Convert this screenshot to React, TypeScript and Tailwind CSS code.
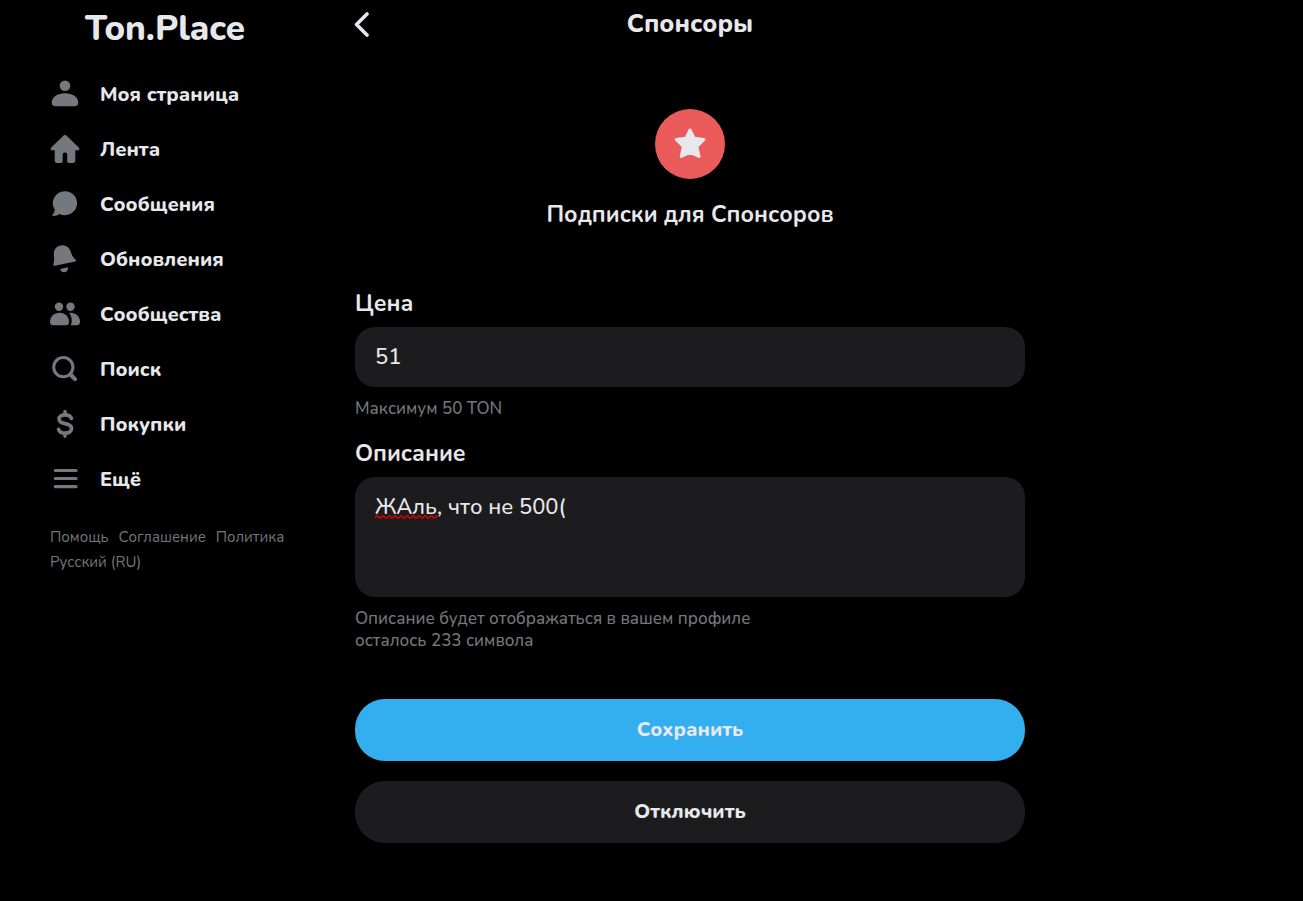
import { useState } from 'react'
import type { ReactNode } from 'react'

interface NavItem {
  label: string
  icon: ReactNode
}

const NAV_ITEMS: NavItem[] = [
  {
    label: 'Моя страница',
    icon: (
      <>
        <circle cx="15" cy="6.8" r="5.3" />
        <path d="M1.7 23.8C1.7 17.8 7.5 14.2 15 14.2S28.3 17.8 28.3 23.8C28.3 26.1 27 27.3 24.5 27.3H5.5C3 27.3 1.7 26.1 1.7 23.8Z" />
      </>
    ),
  },
  {
    label: 'Лента',
    icon: (
      <path d="M13.6 1.6a2 2 0 0 1 2.8 0L28.7 13.6c1.2 1.2.7 2.7-.9 2.7H25.3V26.5c0 1.6-.8 2.4-2.3 2.4H19.3c-1.5 0-2.1-.7-2.1-2.2V20.4c0-1.3-.8-2-2.2-2s-2.3.7-2.3 2V26.7c0 1.5-.6 2.2-2.1 2.2H7c-1.5 0-2.3-.8-2.3-2.4V16.3H2.2c-1.6 0-2.1-1.5-.9-2.7Z" />
    ),
  },
  {
    label: 'Сообщения',
    icon: (
      <path d="M15.2 2.2A12 12 0 1 1 9.6 24.9C7.8 26 5.5 26.8 3.2 26.9c-.8 0-1-.7-.5-1.3C3.9 24.2 4.6 22.5 4.7 20.6A12 12 0 0 1 15.2 2.2Z" />
    ),
  },
  {
    label: 'Обновления',
    icon: (
      <>
        <path d="M3.8 9.8C3.8 4.9 7.3 1.2 12 1.2c4.3 0 7.7 2.7 8.9 6.9.8 3 2.1 5.3 4.6 7.3 1 .9.7 1.9-.5 2.2L5 21.8c-1.3.3-2-.6-1.6-1.8.7-2.3.9-4 .7-6.3Z" />
        <path d="M10.1 25 18.2 23.2C18.2 26.3 16.5 28.3 14 28.3c-1.9 0-3.4-1.3-3.9-3.3Z" />
      </>
    ),
  },
  {
    label: 'Сообщества',
    icon: (
      <>
        <circle cx="9" cy="7.7" r="4.2" />
        <circle cx="20.5" cy="7.7" r="4.2" />
        <path d="M0 22.8C0 17.5 4 13.7 9.5 13.7S19 17.5 19 22.8c0 2.4-1.2 3.5-3.5 3.5h-12C1.2 26.3 0 25.2 0 22.8Z" />
        <path d="M18.9 13.8C25.5 13.2 30 17 30 22.8c0 2.4-1.2 3.5-3.5 3.5h-5.6c1.6-4.6 1-9.2-2-12.5Z" />
      </>
    ),
  },
  {
    label: 'Поиск',
    icon: (
      <g fill="none" stroke="currentColor" strokeLinecap="round">
        <circle cx="13.3" cy="13.2" r="9.6" strokeWidth="3" />
        <path d="M20.5 20.5 25 25.1" strokeWidth="4.2" />
      </g>
    ),
  },
  {
    label: 'Покупки',
    icon: (
      <g fill="none" stroke="currentColor" strokeLinecap="round">
        <path d="M15 2.6V5M15 25V27.2" strokeWidth="3.4" />
        <path
          d="M21.4 9.4C20.5 7 18.3 5.9 15.1 5.9c-3.6 0-6 1.6-6 4.3 0 2.5 2 3.6 6 4.4 4.2.8 6.4 2 6.4 4.9 0 2.9-2.5 4.7-6.4 4.7-3.4 0-5.7-1.2-6.5-3.7"
          strokeWidth="3.8"
        />
      </g>
    ),
  },
  {
    label: 'Ещё',
    icon: (
      <path
        d="M5.3 6.5H26M5.3 14.5H26M5.3 22.7H26"
        fill="none"
        stroke="currentColor"
        strokeWidth="3.2"
        strokeLinecap="round"
      />
    ),
  },
]

const FOOTER_LINKS = ['Помощь', 'Соглашение', 'Политика', 'Русский (RU)']

function Sidebar() {
  return (
    <aside>
      <a href="#" className="block pr-[55px] text-center text-[35px] leading-[58px] font-extrabold">
        Ton.Place
      </a>
      <nav className="mt-[9px]">
        {NAV_ITEMS.map(item => (
          <a key={item.label} href="#" className="flex h-[55px] items-center gap-5 text-xl font-extrabold">
            <svg viewBox="0 1 30 30" className="size-[30px] shrink-0 text-[#76787f]" fill="currentColor" aria-hidden="true">
              {item.icon}
            </svg>
            {item.label}
          </a>
        ))}
      </nav>
      <div className="mt-[18px] flex flex-wrap gap-x-[10px] text-[15px] leading-[25px] text-[#76767d]">
        {FOOTER_LINKS.map(link => (
          <a key={link} href="#">
            {link}
          </a>
        ))}
      </div>
    </aside>
  )
}

function SponsorForm() {
  const [price, setPrice] = useState('51')
  const [description, setDescription] = useState('ЖАль, что не 500(')

  return (
    <form className="mt-[55px] flex flex-col" onSubmit={e => e.preventDefault()}>
      <label htmlFor="price" className="text-[23px] leading-[34px] font-bold">
        Цена
      </label>
      <input
        id="price"
        value={price}
        onChange={e => setPrice(e.target.value)}
        className="mt-[6px] h-[60px] rounded-[20px] bg-[#1c1c1e] px-5 text-[22px] font-medium outline-none"
      />
      <p className="mt-[11px] text-[17px] leading-[22px] font-medium text-[#76767d]">Максимум 50 TON</p>

      <label htmlFor="description" className="mt-[17px] text-[23px] leading-[34px] font-bold">
        Описание
      </label>
      <div className="relative mt-[6px]">
        <textarea
          id="description"
          value={description}
          onChange={e => setDescription(e.target.value)}
          spellCheck={false}
          className="block h-[120px] w-full resize-none rounded-[20px] bg-[#1c1c1e] px-5 py-[15px] text-[22px] leading-[30px] font-medium outline-none"
        />
        {/* Spelling mark under the first word */}
        <svg className="absolute top-[38px] left-5 h-1 w-[63px]" aria-hidden="true">
          <defs>
            <pattern id="squiggle" width="6" height="4" patternUnits="userSpaceOnUse">
              <path d="M0 3 1.5 1 3 1 4.5 3 6 3" fill="none" stroke="#e00000" strokeWidth="1.3" />
            </pattern>
          </defs>
          <rect width="100%" height="4" fill="url(#squiggle)" />
        </svg>
      </div>
      <p className="mt-[11px] text-[17px] leading-[22px] font-medium text-[#76767d]">
        Описание будет отображаться в вашем профиле
        <br />
        осталось 233 символа
      </p>

      <button type="submit" className="mt-[47px] h-[62px] rounded-[30px] bg-[#33aeee] text-xl font-extrabold">
        Сохранить
      </button>
      <button type="button" className="mt-5 h-[62px] rounded-[30px] bg-[#1c1c1e] text-xl font-extrabold">
        Отключить
      </button>
    </form>
  )
}

export default function App() {
  return (
    <div className="grid min-h-screen grid-cols-[285px_minmax(0,670px)] gap-5 bg-black pb-14 pl-[50px] font-['Nunito','Open_Sans',sans-serif] text-[#e7e8ec]">
      <Sidebar />
      <main>
        <header className="grid h-[50px] grid-cols-[48px_1fr_48px] items-center">
          <button type="button" aria-label="Назад">
            <svg viewBox="0 0 16 28" className="-ml-px h-7 w-4" fill="none" stroke="currentColor" strokeWidth="3.6" strokeLinecap="round" strokeLinejoin="round" aria-hidden="true">
              <path d="M13 3 2.500 13.500 13 24" />
            </svg>
          </button>
          <h1 className="text-center text-[25px] font-extrabold">Спонсоры</h1>
        </header>

        <section className="mt-[59px] flex flex-col items-center">
          <div className="flex size-[70px] items-center justify-center rounded-full bg-[#ec5b5b]">
            <svg viewBox="0 0 32 32" className="size-8" fill="currentColor" stroke="currentColor" strokeWidth="3" strokeLinejoin="round" aria-hidden="true">
              <path d="M16 2 20.2 10.300 30 11.500 22.900 18.300 25 28.500 16 24.500 7.300 28.500 9.400 18.300 2.300 11.500 11.900 10.300Z" />
            </svg>
          </div>
          <h2 className="mt-[19px] text-[23px] leading-[34px] font-bold">Подписки для Спонсоров</h2>
        </section>

        <SponsorForm />
      </main>
    </div>
  )
}
